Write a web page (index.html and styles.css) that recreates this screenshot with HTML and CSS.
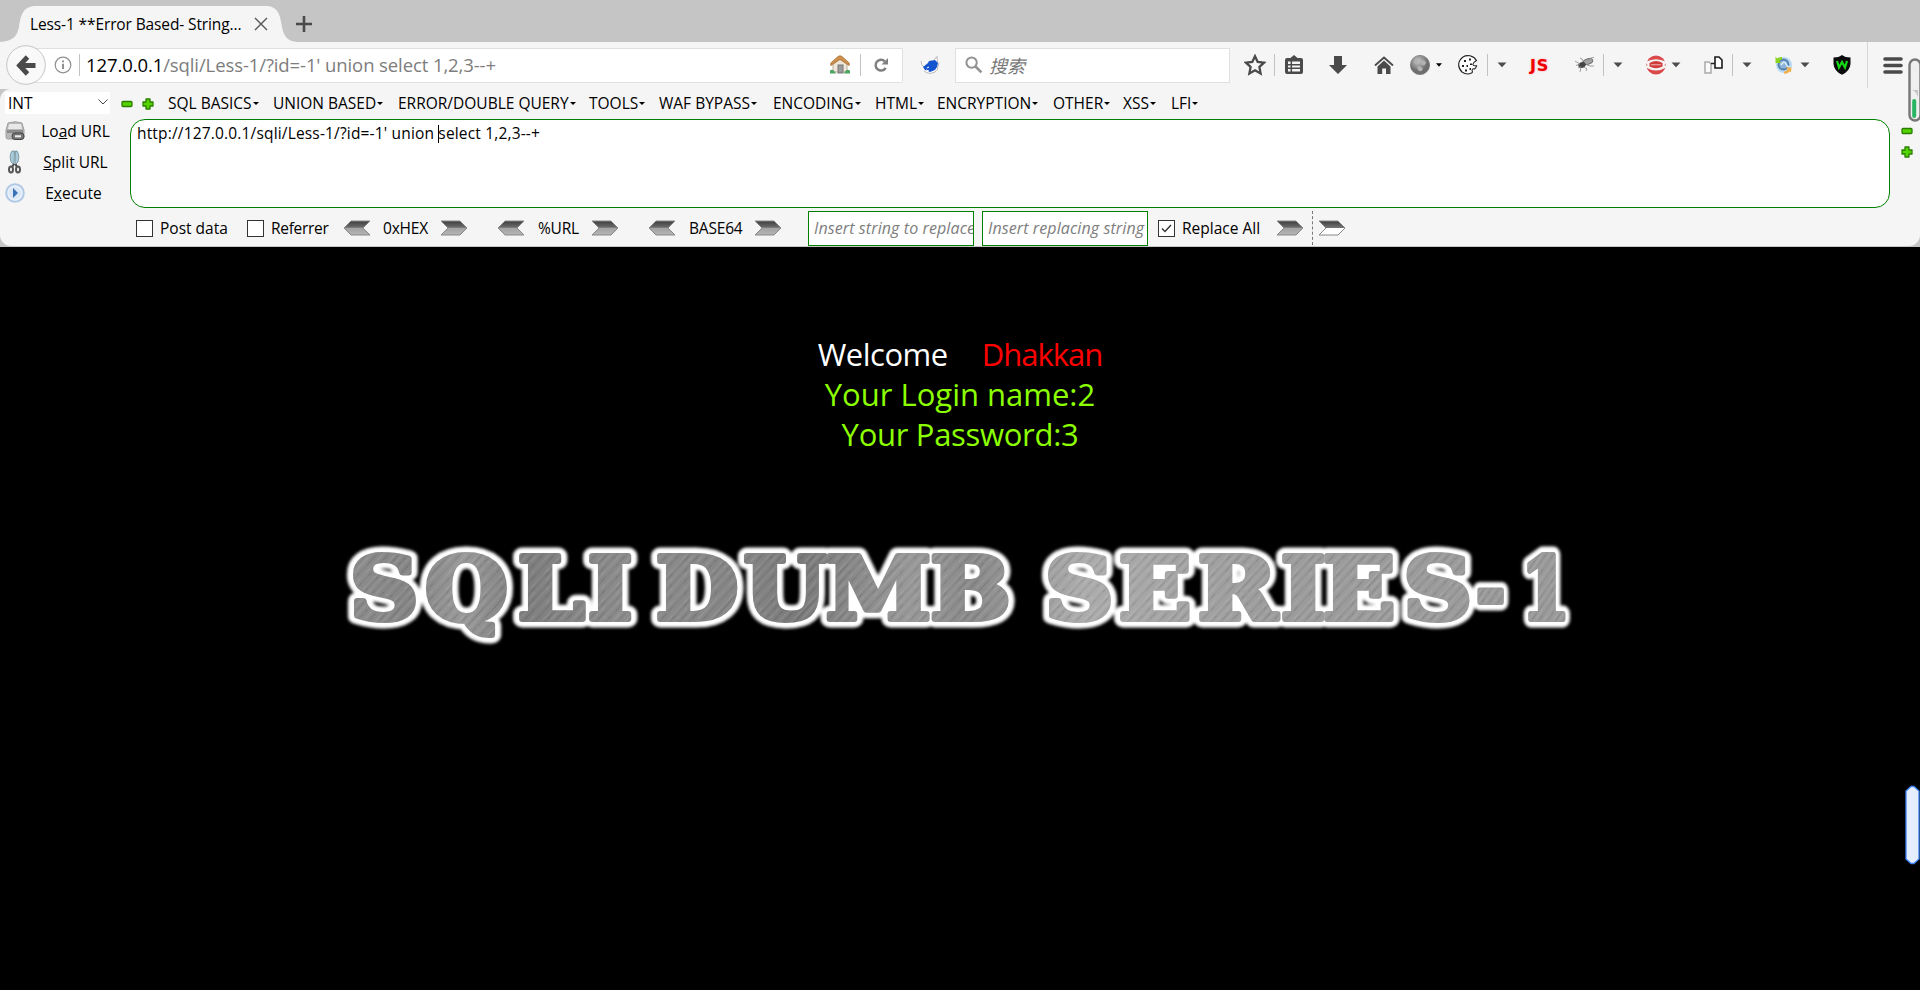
FILE: index.html
```html
<!DOCTYPE html>
<html lang="zh-CN">
<head>
<meta charset="utf-8">
<title>Less-1 **Error Based- String**</title>
<link rel="stylesheet" href="styles.css">
</head>
<body>
<svg class="defs" width="0" height="0">
  <defs>
    <linearGradient id="steel" x1="0" y1="0" x2="0" y2="1"><stop offset="0" stop-color="#3e3e3e"/><stop offset=".45" stop-color="#6b6b6b"/><stop offset=".5" stop-color="#a2a2a2"/><stop offset="1" stop-color="#b5b5b5"/></linearGradient>
    <linearGradient id="steel-open" x1="0" y1="0" x2="0" y2="1"><stop offset="0" stop-color="#3e3e3e"/><stop offset=".5" stop-color="#777"/><stop offset=".52" stop-color="#fff"/><stop offset="1" stop-color="#fff"/></linearGradient>
    <symbol id="arrow-r" viewBox="0 0 28 16"><path d="M1 1H20L27 8L20 15H1L8 8Z" fill="url(#steel)" stroke="#888"/></symbol>
    <symbol id="arrow-l" viewBox="0 0 28 16"><path d="M27 1H8L1 8L8 15H27L20 8Z" fill="url(#steel)" stroke="#888"/></symbol>
    <symbol id="minus" viewBox="0 0 12 12"><rect x="1" y="3.5" width="10" height="5" rx="1" fill="#55d400" stroke="#2b7d00" stroke-width="1.3"/></symbol>
    <symbol id="plus" viewBox="0 0 12 12"><path d="M4 1H8V4H11V8H8V11H4V8H1V4H4Z" fill="#55d400" stroke="#2b7d00" stroke-width="1.3" stroke-linejoin="round"/></symbol>
    <symbol id="drop" viewBox="0 0 10 6"><path d="M.5 .5H9.5L5 5.3Z" fill="#4c4c4c"/></symbol>
  </defs>
</svg>

<div class="tabbar">
  <svg class="tab-shape" width="300" height="42" viewBox="0 0 300 42"><path d="M0 42C12 41 17 37 19 27C21 14 23 6 37 6H265C278 6 280 14 282 27C284 37 288 41 297 42Z" fill="#f5f5f5"/></svg>
  <span class="tab-title">Less-1 **Error Based- String...</span>
  <svg class="tab-close" width="14" height="14" viewBox="0 0 14 14"><path d="M1 1L13 13M13 1L1 13" stroke="#555" stroke-width="1.4"/></svg>
  <svg class="tab-new" width="16" height="16" viewBox="0 0 16 16"><path d="M8 0V16M0 8H16" stroke="#4a4a4a" stroke-width="2.6"/></svg>
</div>

<div class="navbar">
  <div class="urlbar">
    <svg class="back" width="40" height="40" viewBox="0 0 40 40"><circle cx="20" cy="20" r="19.3" fill="#f9f9f9" stroke="#c4c4c4"/><path d="M29.500 20.500H15M21.500 12L13.500 20.500L21.500 29" fill="none" stroke="#4a4a4a" stroke-width="4.800"/></svg>
    <svg class="info" width="18" height="18" viewBox="0 0 18 18"><circle cx="9" cy="9" r="7.8" fill="none" stroke="#909090" stroke-width="1.2"/><path d="M9 7.8V13M9 4.4V6.2" stroke="#909090" stroke-width="2"/></svg>
    <i class="vline url-line"></i>
    <span class="url"><b>127.0.0.1</b>/sqli/Less-1/?id=-1' union select 1,2,3--+</span>
    <svg class="house" width="20" height="20" viewBox="0 0 20 20"><path d="M3 9L10 3L17 9V17H3Z" fill="#efe6da" stroke="#b9aa98"/><path d="M.8 10.5L.8 8L8 1.5Q10 0 12 1.5L19.2 8V10.5L10 4.5Z" fill="#cf914e" stroke="#a96c2c" stroke-width=".8"/><rect x="8" y="10" width="5" height="8" fill="#9b9b9b" stroke="#777"/><path d="M0 15.5Q3 13 6 18.5H0ZM14 18.5Q16 13 20 15.5V18.5Z" fill="#4da560"/></svg>
    <i class="vline"></i>
    <svg class="reload" width="16" height="16" viewBox="0 0 16 16"><path d="M12.7 10.8A5.4 5.4 0 1 1 11.8 4.3" fill="none" stroke="#808080" stroke-width="2.5"/><path d="M15 1V7.5H8.5Z" fill="#808080"/></svg>
  </div>
  <svg class="bluefox" width="20" height="20" viewBox="0 0 20 20"><path d="M1 6Q1 11 5 13M14 5L17 1.500Q17 4 17.500 7Q20 8 18 11Q18 15 15 17Q9 20 4 16" fill="#fff" stroke="#999" stroke-width=".7"/><path d="M3 12L8 8L9 6L15 5L18 8L17 12L15 15L10 17L5 15Z" fill="#1554cf"/><path d="M7 13L9 12M6 15L9 16" stroke="#fff" stroke-width="1"/></svg>
  <div class="search">
    <svg width="18" height="18" viewBox="0 0 18 18"><circle cx="6.6" cy="6.6" r="5.2" fill="none" stroke="#929292" stroke-width="2"/><path d="M10.5 10.5L16.4 16.4" stroke="#929292" stroke-width="2.6"/></svg>
    <span>搜索</span>
  </div>
  <svg class="i-star" width="22" height="22" viewBox="0 0 22 22"><path d="M11 2.200L13.700 8L20 8.700L15.400 13L16.600 19.400L11 16.200L5.400 19.400L6.600 13L2 8.700L8.300 8Z" fill="none" stroke="#4a4a4a" stroke-width="2.300"/></svg>
  <i class="vline l1"></i>
  <svg class="i-list" width="18" height="20" viewBox="0 0 18 20"><path d="M2 3H5.500L9 0L12.500 3H16Q18 3 18 5V17Q18 19 16 19H2Q0 19 0 17V5Q0 3 2 3Z" fill="#4a4a4a"/><path d="M3 6.500H15V16.500H3Z" fill="#f5f5f5"/><path d="M3 9.800H15M3 13.200H15M6.300 6V17" stroke="#4a4a4a" stroke-width="1.500"/></svg>
  <svg class="i-down" width="18" height="18" viewBox="0 0 18 18"><path d="M5 0H13V9H18L9 18L0 9H5Z" fill="#4a4a4a"/></svg>
  <svg class="i-home" width="20" height="18" viewBox="0 0 20 18"><path d="M1 9.500L10 1.500L19 9.500" fill="none" stroke="#4a4a4a" stroke-width="1.800"/><path d="M3.500 10.500L10 4.600L16.500 10.500V18H12V12.500H8.200V18H3.500Z" fill="#4a4a4a"/></svg>
  <svg class="i-ball" width="20" height="20" viewBox="0 0 20 20"><defs><radialGradient id="ball" cx=".4" cy=".3"><stop offset="0" stop-color="#c8c8c8"/><stop offset="1" stop-color="#6e6e6e"/></radialGradient></defs><circle cx="10" cy="10" r="9.600" fill="url(#ball)" stroke="#777" stroke-width=".8"/><path d="M5 5Q8 3 9 6Q7 9 4 8ZM11 6Q15 4 16 8Q14 12 11 9ZM7 12Q11 10 13 14Q11 18 8 15Z" fill="#b2b2b2"/></svg>
  <svg class="c-ball" width="6" height="4" viewBox="0 0 10 6"><path d="M0 0H10L5 6Z"/></svg>
  <svg class="i-cookie" width="20" height="20" viewBox="0 0 20 20"><path d="M18.500 5.500Q15 7.500 14.800 9.500Q15 11 18.600 10.800Q18 13 16.500 14Q14.500 13 14 15.500Q15 17.500 13.500 18Q9 20.500 4 17Q-1 12 1.500 6Q5-.5 12 .8Q16.500 2 18.500 5.500Z" fill="#fff" stroke="#222" stroke-width="1.100"/><path d="M6 5H8V7H6ZM11 3.500H13V5.500H11ZM12 8.500H14V10H12ZM4 10H6V12H4ZM8.500 10H10V12H8.500ZM7 14.500H9V16.500H7ZM11.500 13H13V15H11.500Z" fill="#222"/></svg>
  <i class="vline l2"></i>
  <svg class="drop d1"><use href="#drop"/></svg>
  <span class="js">JS</span>
  <svg class="i-fly" width="20" height="18" viewBox="0 0 20 18"><ellipse cx="13" cy="5.500" rx="5" ry="2.800" transform="rotate(-15 13 5.500)" fill="#a2a2a2" stroke="#555" stroke-width=".7"/><ellipse cx="7" cy="9" rx="3.800" ry="2.800" transform="rotate(-20 7 9)" fill="#444"/><path d="M0 5L5 8L1 9.500M3 12L6 10.500L5 16M9 11L12 13L11 15M12 9L15 10L19 10M8 6L7 3L5 2M13 4L16 2L19 1.500" fill="none" stroke="#888" stroke-width=".8"/></svg>
  <i class="vline l3"></i>
  <svg class="drop d2"><use href="#drop"/></svg>
  <svg class="i-red" width="20" height="20" viewBox="0 0 20 20"><circle cx="10" cy="10" r="9.600" fill="#db4a4a"/><path d="M0 6.800Q10 1.800 20 6.800L18.600 9.800L20 12.500Q10 18.500 0 12.500L1.400 9.800Z" fill="#f5f5f5"/><path d="M3.500 8Q10 4 16.500 8V11.500Q10 15 3.500 11.500Z" fill="#cf3c3c"/><path d="M5 9.700H15" stroke="#eda0a0" stroke-width="1.200"/></svg>
  <svg class="drop d3"><use href="#drop"/></svg>
  <svg class="i-pages" width="19" height="18" viewBox="0 0 19 18"><path d="M1 6H5L7 8V17H1Z" fill="#fafafa" stroke="#aaa" stroke-width="1.500"/><path d="M11 1H15L18 4V12H11Z" fill="#fff" stroke="#1a1a1a" stroke-width="1.600"/><path d="M7 7.500H11" stroke="#222" stroke-width="1.500"/></svg>
  <i class="vline l4"></i>
  <svg class="drop d4"><use href="#drop"/></svg>
  <svg class="i-sync" width="20" height="20" viewBox="0 0 20 20"><circle cx="10" cy="10" r="8" fill="#b9dbf5"/><circle cx="9.500" cy="9.500" r="5" fill="#8db4d8" stroke="#5580ad" stroke-width="1.800"/><path d="M7 10Q10 5 12 9T15 11" stroke="#d8eefc" stroke-width="1.600" fill="none"/><path d="M1.500 1.500L3 3.500Q5 2 8 2V4.500Q6 4.500 5.500 6L7 8H1.500Z" fill="#8ad321"/><path d="M17 17.500L15.500 16.500Q13 19.500 10 18.500V16.500Q13 16.500 13.500 14L11.500 12.500H17.500Z" fill="#f1b04a"/></svg>
  <svg class="drop d5"><use href="#drop"/></svg>
  <svg class="i-shield" width="18" height="20" viewBox="0 0 18 20"><path d="M9 0Q12 2.500 17.500 2.500V9Q17 16 9 19.800Q1 16 .5 9V2.500Q6 2.500 9 0Z" fill="#0b0b0b"/><path d="M4 6L6 12.500L9 7L12 12.500L14 6" fill="none" stroke="#16d916" stroke-width="2.200"/></svg>
  <i class="vline l5"></i>
  <svg class="i-menu" width="20" height="17" viewBox="0 0 20 17"><path d="M2 2H18M2 8.500H18M2 15H18" stroke="#4a4a4a" stroke-width="3.600" stroke-linecap="round"/></svg>
</div>

<div class="hackwrap">
<div class="hackbar">
  <div class="menus">
    <div class="select"><span>INT</span><svg width="10" height="6" viewBox="0 0 10 6"><path d="M.5 .5L5 5L9.500 .5" fill="none" stroke="#444"/></svg></div>
    <svg class="pm"><use href="#minus"/></svg>
    <svg class="pm"><use href="#plus"/></svg>
    <span class="menu">SQL BASICS</span><span class="menu">UNION BASED</span><span class="menu">ERROR/DOUBLE QUERY</span><span class="menu">TOOLS</span><span class="menu">WAF BYPASS</span><span class="menu">ENCODING</span><span class="menu">HTML</span><span class="menu">ENCRYPTION</span><span class="menu">OTHER</span><span class="menu">XSS</span><span class="menu">LFI</span>
  </div>
  <div class="middle">
    <div class="actions">
      <div class="action"><svg width="20" height="20" viewBox="0 0 20 20"><path d="M3 2Q10-.5 17 2L19 9V16Q19 18 17 18H3Q1 18 1 16V9Z" fill="#b8b8b8" stroke="#a0a0a0"/><path d="M4 3H16L17 8H3Z" fill="#e8e8e8"/><path d="M2 9H18V12H2Z" fill="#8a8a8a"/><rect x="7" y="12" width="12" height="6.500" rx="3" fill="#777" stroke="#444"/><path d="M10 15.300H16" stroke="#eee" stroke-width="2"/></svg><span>Lo<u>a</u>d URL</span></div>
      <div class="action"><svg width="20" height="24" viewBox="0 0 20 24"><path d="M7 1Q4 5 6 12L9 15L9.500 1ZM10.500 1L10 15L13 12Q15 5 12 1Z" fill="#a9cbd9" stroke="#6f8d99" stroke-width=".8"/><path d="M9 14L7 17M10.500 14L12 17" stroke="#444" stroke-width="2"/><ellipse cx="6" cy="19.500" rx="2" ry="3" fill="none" stroke="#555" stroke-width="2"/><ellipse cx="13" cy="19.500" rx="2" ry="3" fill="none" stroke="#555" stroke-width="2"/></svg><span><u>S</u>plit URL</span></div>
      <div class="action run"><svg width="20" height="20" viewBox="0 0 20 20"><circle cx="10" cy="10" r="8.800" fill="#eef4fb" stroke="#b1c9e6" stroke-width="2"/><circle cx="10" cy="10" r="6.500" fill="#dce8f5"/><path d="M8 5L13 10L8 15Z" fill="#3a72b8"/></svg><span>E<u>x</u>ecute</span></div>
    </div>
    <div class="editor">http://127.0.0.1/sqli/Less-1/?id=-1' union <i class="caret"></i>select 1,2,3--+</div>
    <div class="side"><svg class="pm"><use href="#minus"/></svg><svg class="pm"><use href="#plus"/></svg></div>
  </div>
  <div class="options">
    <i class="check"></i><span class="t-post">Post data</span>
    <i class="check"></i><span class="t-ref">Referrer</span>
    <svg class="arrow"><use href="#arrow-l"/></svg><span class="t-hex">0xHEX</span><svg class="arrow"><use href="#arrow-r"/></svg>
    <svg class="arrow"><use href="#arrow-l"/></svg><span class="t-url">%URL</span><svg class="arrow"><use href="#arrow-r"/></svg>
    <svg class="arrow"><use href="#arrow-l"/></svg><span class="t-b64">BASE64</span><svg class="arrow"><use href="#arrow-r"/></svg>
    <div class="field">Insert string to replace</div>
    <div class="field">Insert replacing string</div>
    <i class="check"><svg width="15" height="15" viewBox="0 0 15 15"><path d="M3 7.500L6 10.500L12 4" fill="none" stroke="#333" stroke-width="1.400"/></svg></i><span class="t-all">Replace All</span>
    <svg class="arrow"><use href="#arrow-r"/></svg>
    <i class="dash"></i>
    <svg class="arrow" viewBox="0 0 28 16"><path d="M1 1H20L27 8L20 15H1L8 8Z" fill="url(#steel-open)" stroke="#888"/></svg>
  </div>
</div>
</div>

<main class="page">
  <p class="line welcome"><span class="w1">Welcome</span><span class="w2">Dhakkan</span></p>
  <p class="line login">Your Login name:2</p>
  <p class="line pass">Your Password:3</p>
  <svg class="logo" width="1240" height="120" viewBox="340 535 1240 120">
    <defs>
      <filter id="glow" x="-5%" y="-20%" width="110%" height="140%"><feGaussianBlur stdDeviation="1.800"/></filter>
      <linearGradient id="metal" gradientUnits="userSpaceOnUse" x1="309" y1="-60" x2="1436" y2="0"><stop offset="0" stop-color="#8e8e8e"/><stop offset=".06" stop-color="#868686"/><stop offset=".1" stop-color="#999"/><stop offset=".15" stop-color="#7e7e7e"/><stop offset=".23" stop-color="#8c8c8c"/><stop offset=".33" stop-color="#858585"/><stop offset=".37" stop-color="#7a7a7a"/><stop offset=".46" stop-color="#999"/><stop offset=".51" stop-color="#8a8a8a"/><stop offset=".6" stop-color="#acacac"/><stop offset=".75" stop-color="#9c9c9c"/><stop offset="1" stop-color="#9a9a9a"/></linearGradient>
      <pattern id="brush" width="29" height="1200" patternUnits="userSpaceOnUse" patternTransform="rotate(40)"><path d="M2 0V1200M7.500 0V1200M14 0V1200M22.300 0V1200" stroke="#fff" stroke-opacity=".1" stroke-width=".8"/><path d="M4.500 0V1200M11 0V1200M18 0V1200M26 0V1200" stroke="#000" stroke-opacity=".1" stroke-width=".8"/></pattern>
      <g id="words">
        <text transform="translate(0 619.700) scale(1.1 1)" x="318.200 386.500 470.900 534.500 596.400 676.400 750.900 846" y="0">SQLIDUMB</text>
        <text transform="translate(0 619.700) scale(1.1 1)" x="950 1017.300 1089.100 1164.500 1202.700 1276" y="0">SERIES</text>
        <text transform="translate(0 619.700) scale(.82 1)" x="1800 1855" y="0">-1</text>
      </g>
    </defs>
    <use href="#words" class="halo" filter="url(#glow)"/>
    <use href="#words" class="rim"/>
    <use href="#words" class="face"/>
    <use href="#words" class="grain"/>
  </svg>
</main>

<svg class="meter" width="14" height="64" viewBox="0 0 14 64"><rect x="1.500" y="1.500" width="11" height="61" rx="5.500" fill="#efefef" stroke="#777" stroke-width="2.400"/><path d="M4 32Q8 33 10 39V32Z" fill="#c5c5c5"/><rect x="4.200" y="41" width="4" height="19" rx="2" fill="#27b562"/></svg>
<svg class="handle" width="15" height="80" viewBox="0 0 15 80"><path d="M1 6L6 1.500H9L14 6V74L9 78.500H6L1 74Z" fill="#e4eeff" stroke="#3d84f5" stroke-width="1.300"/></svg>
</body>
</html>
```
FILE: styles.css
```css
* { box-sizing: border-box; }
body { margin: 0; width: 1920px; height: 990px; overflow: hidden; background: #000; color: #000; font-family: "Open Sans", "Noto Sans", "Noto Sans CJK SC", sans-serif; font-size: 15.5px; position: relative; }
svg { display: block; flex: none; }
span { white-space: nowrap; }
.defs { position: absolute; }
.vline { flex: none; width: 1px; height: 22px; background: #c2c2c2; }

/* tabs */
.tabbar { height: 42px; background: #c5c5c5; display: grid; grid-template-columns: 30px 224px 42px 1fr; align-items: center; }
.tab-shape { grid-area: 1 / 1 / 2 / 4; }
.tab-title { grid-area: 1 / 2; padding-top: 6px; letter-spacing: -.12px; }
.tab-close { grid-area: 1 / 3; margin-top: 6px; }
.tab-new { grid-area: 1 / 4; margin-top: 6px; }

/* navigation */
.navbar { height: 47px; background: #f5f5f5; display: flex; align-items: center; padding-bottom: 1px; }
.urlbar { width: 877px; margin-left: 26px; height: 35px; background: #fff; border: 1px solid #e0e0e0; border-left: 0; border-radius: 0 2px 2px 0; display: flex; align-items: center; }
.back { margin-left: -20px; }
.info { margin-left: 8px; }
.url-line { margin: 0 6px 0 7px; }
.url { width: 744px; font-size: 18.5px; letter-spacing: -.1px; color: #7d7d7d; padding-bottom: 1px; }
.url b { font-weight: 400; color: #000; }
.house { margin-right: 10px; }
.reload { margin-left: 12px; }
.bluefox { margin-left: 17px; }
.search { width: 275px; height: 35px; margin-left: 15px; background: #fff; border: 1px solid #e0e0e0; padding-left: 9px; display: flex; align-items: center; gap: 6px; font: italic 18px "Noto Sans CJK SC", sans-serif; color: #777; }
.i-star { margin-left: 14px; }
.l1 { margin-left: 8px; }
.i-list { margin-left: 10px; }
.i-down { margin-left: 26px; }
.i-home { margin-left: 27px; }
.i-ball { margin-left: 16px; }
.c-ball { margin-left: 6px; }
.i-cookie { margin-left: 16px; }
.l2 { margin-left: 9px; }
.drop { width: 10px; height: 6px; }
.d1, .d2, .d4 { margin-left: 9px; }
.js { width: 20px; margin-left: 23px; font: bold 16px "DejaVu Sans", sans-serif; letter-spacing: .9px; color: #f00000; text-shadow: 0 0 2px #ff9c9c; }
.i-fly { margin-left: 25px; }
.l3 { margin-left: 8px; }
.i-red { margin-left: 23px; }
.d3 { margin-left: 5px; }
.i-pages { margin-left: 23px; }
.l4 { margin-left: 9px; }
.i-sync { margin-left: 22px; }
.d5 { margin-left: 6px; }
.i-shield { margin-left: 23px; }
.l5 { margin-left: 16px; height: 46px; opacity: .6; }
.i-menu { margin-left: 15px; }

/* query toolbar */
.hackwrap { background: #c5c5c5; height: 158px; }
.hackbar { height: 157px; background: #f5f5f5; border-radius: 11px; padding-top: 3px; }
.menus { height: 27px; display: grid; grid-template-columns: 105px 21px 20px 105px 125px 191px 70px 114px 102px 62px 116px 70px 48px 40px; padding-left: 5px; align-items: start; line-height: 23px; }
.select { height: 22px; background: #fff; display: flex; justify-content: space-between; align-items: center; padding: 0 2px 0 3px; }
.select svg { margin-bottom: 3px; }
.pm { width: 12px; height: 12px; }
.menus > .pm { margin: 6px 0 0 11px; }
.menu { padding-left: 17px; }
.menu::after { content: ""; display: inline-block; margin-left: 1px; border: 3px solid transparent; border-top-color: #000; border-bottom: 0; vertical-align: 4px; }
.middle { display: grid; grid-template-columns: 130px 1760px 30px; height: 89px; }
.actions { padding-left: 5px; margin-top: -4px; }
.action { height: 31px; display: grid; grid-template-columns: 20px 100px; align-items: center; }
.action span { text-align: center; width: 101px; }
.run span { width: 97px; }
.editor { border: 1px solid #008000; border-radius: 15px; background: #fff; padding: 2px 6px; line-height: 22px; white-space: pre; letter-spacing: .17px; }
.caret { display: inline-block; width: 1px; height: 18px; background: #000; vertical-align: -4px; margin-right: -1px; }
.side { padding: 6px 0 0 11px; display: flex; flex-direction: column; gap: 9px; }
.options { height: 37px; display: flex; align-items: center; padding: 3px 0 0 136px; }
.options > span { padding-bottom: 1px; }
.check { flex: none; width: 17px; height: 17px; border: 1px solid #333; background: #fff; margin-right: 7px; }
.arrow { width: 28px; height: 16px; }
.t-post { width: 87px; }
.t-ref { width: 72px; letter-spacing: -.3px; }
.t-hex { width: 69px; padding-left: 12px; letter-spacing: -.2px; }
.t-url { width: 66px; padding-left: 13px; letter-spacing: -.2px; }
.t-b64 { width: 78px; padding-left: 13px; letter-spacing: -.2px; }
.t-hex + .arrow, .t-url + .arrow { margin-right: 29px; }
.t-b64 + .arrow { margin-right: 26px; }
.field { width: 166px; height: 35px; flex: none; margin-right: 8px; border: 1px solid #008000; background: #fff; color: #7d7d7d; font-size: 16px; font-style: italic; line-height: 33px; padding-left: 5px; white-space: nowrap; overflow: hidden; letter-spacing: .1px; }
.field + .check { margin-left: 2px; }
.t-all { width: 94px; }
.dash { height: 34px; border-left: 1px dashed #777; margin: 0 5px 0 8px; }

/* page */
.page { height: 743px; padding-top: 87px; }
.line { margin: 0; height: 40px; line-height: 40px; font-size: 31px; text-align: center; color: #8cff00; }
.welcome { display: flex; justify-content: center; gap: 34px; color: #fff; }
.w1 { letter-spacing: -.5px; }
.w2 { color: #f00; letter-spacing: -1px; }
.pass { letter-spacing: -.3px; }
.logo { margin: 80px 0 0 340px; font: bold 86px "DejaVu Serif", serif; stroke-linejoin: round; }
.halo { fill: #fff; stroke: #fff; stroke-width: 17px; }
.rim { fill: #fff; stroke: #fff; stroke-width: 10px; }
.face { fill: url(#metal); stroke: url(#metal); stroke-width: 6px; }
.grain { fill: url(#brush); stroke: url(#brush); stroke-width: 6px; }

/* desktop overlays at the right edge */
.meter { position: absolute; left: 1908px; top: 58px; }
.handle { position: absolute; left: 1905px; top: 785px; }
```
